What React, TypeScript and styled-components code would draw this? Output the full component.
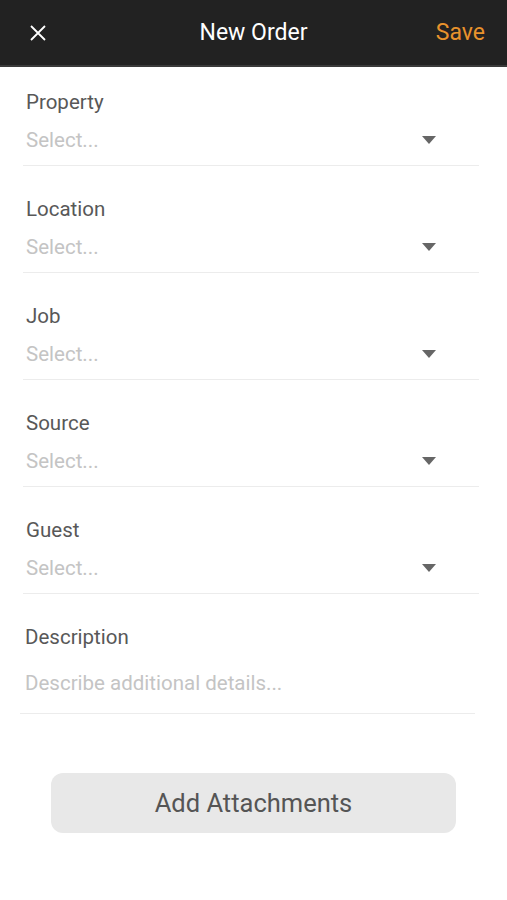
import { createGlobalStyle, styled } from 'styled-components';

const GlobalStyle = createGlobalStyle`
  * { box-sizing: border-box; }
  body {
    margin: 0;
    background: #fff;
    font-family: Roboto, "Liberation Sans", sans-serif;
  }
`;

const Screen = styled.div`
  width: 507px;
  min-height: 900px;
  background: #fff;
  display: flex;
  flex-direction: column;
`;

const TopBar = styled.header`
  height: 67px;
  background: #222222;
  border-bottom: 2px solid #3a3a3a;
  display: grid;
  grid-template-columns: 80px 1fr 80px;
  align-items: center;
`;

const CloseButton = styled.button`
  background: none;
  border: none;
  padding: 0;
  margin-left: 29px;
  width: 18px;
  height: 18px;
  display: flex;
  color: #fff;
`;

const Title = styled.h1`
  margin: 0;
  text-align: center;
  color: #fff;
  font-size: 23px;
  font-weight: 400;
`;

const SaveButton = styled.button`
  background: none;
  border: none;
  padding: 0 22px 0 0;
  justify-self: end;
  color: #e8922c;
  font-family: inherit;
  font-size: 23px;
`;

const Form = styled.div`
  display: flex;
  flex-direction: column;
  padding-top: 23px;
`;

const Field = styled.div<{ $wide?: boolean }>`
  margin: 0 ${p => (p.$wide ? '32px' : '28px')} 31px ${p => (p.$wide ? '20px' : '23px')};
  padding: 0 0 ${p => (p.$wide ? '15px' : '10px')} ${p => (p.$wide ? '5px' : '3px')};
  border-bottom: 1px solid #ececec;
  display: flex;
  flex-direction: column;
  gap: ${p => (p.$wide ? '19px' : '11px')};
`;

const Label = styled.label`
  font-size: 20.5px;
  line-height: 24px;
  color: #585858;
`;

const SelectRow = styled.div`
  height: 30px;
  display: flex;
  align-items: center;
  justify-content: space-between;
  padding-right: 43px;
`;

const Placeholder = styled.span`
  font-size: 20.5px;
  color: #c4c4c4;
`;

const Caret = styled.span`
  width: 0;
  height: 0;
  border-left: 7.5px solid transparent;
  border-right: 7.5px solid transparent;
  border-top: 8px solid #666;
`;

const Footer = styled.div`
  display: flex;
  justify-content: center;
  padding: 28px 51px 0 51px;
`;

const AttachButton = styled.button`
  width: 100%;
  height: 60px;
  border: none;
  border-radius: 12px;
  background: #e8e8e8;
  color: #555;
  font-family: inherit;
  font-size: 25.5px;
`;

const fields = ['Property', 'Location', 'Job', 'Source', 'Guest'];

export default function App() {
  return (
    <Screen>
      <GlobalStyle />
      <TopBar>
        <CloseButton aria-label="Close">
          <svg viewBox="0 0 18 18" width="18" height="18">
            <path d="M2 2L16 16M16 2L2 16" stroke="currentColor" strokeWidth="1.8" />
          </svg>
        </CloseButton>
        <Title>New Order</Title>
        <SaveButton>Save</SaveButton>
      </TopBar>
      <Form>
        {fields.map(name => (
          <Field key={name}>
            <Label>{name}</Label>
            <SelectRow>
              <Placeholder>Select...</Placeholder>
              <Caret />
            </SelectRow>
          </Field>
        ))}
        <Field $wide>
          <Label>Description</Label>
          <SelectRow>
            <Placeholder>Describe additional details...</Placeholder>
          </SelectRow>
        </Field>
      </Form>
      <Footer>
        <AttachButton>Add Attachments</AttachButton>
      </Footer>
    </Screen>
  );
}
